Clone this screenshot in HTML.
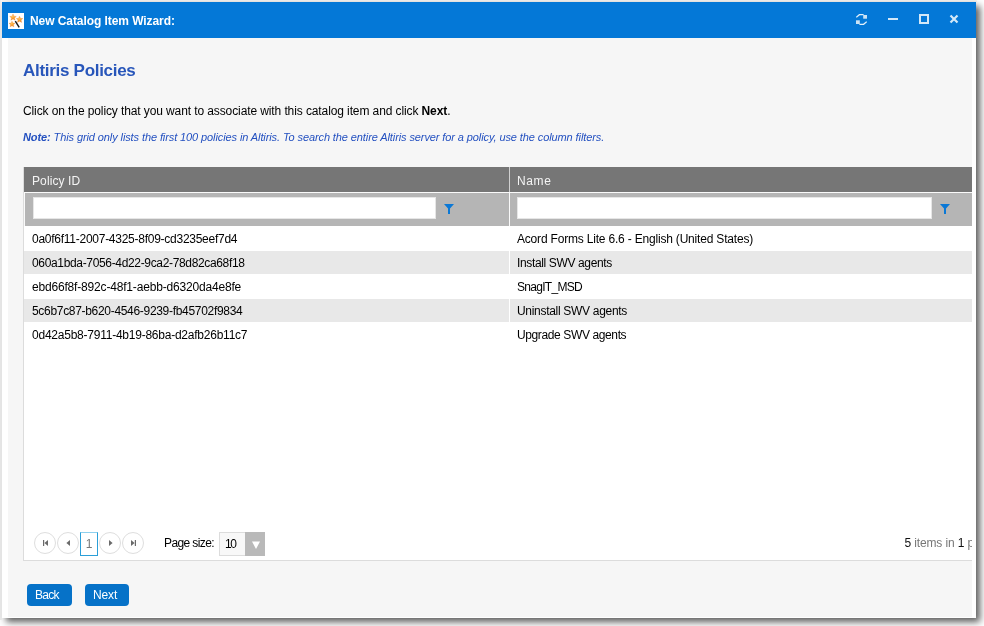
<!DOCTYPE html>
<html><head><meta charset="utf-8"><title>New Catalog Item Wizard</title>
<style>
*{box-sizing:border-box;margin:0;padding:0}
html,body{width:984px;height:626px;overflow:hidden;background:#fff;font-family:"Liberation Sans",sans-serif;font-size:12px;color:#000}
.abs{position:absolute;white-space:nowrap}
#edgeL{left:0;top:0;width:2px;height:620px;background:linear-gradient(90deg,#ececec,#f8f8f8)}
#edgeT{left:0;top:0;width:977px;height:2px;background:#f5f3f1}
#win{will-change:transform;left:2px;top:2px;width:974px;height:616px;background:#fff;box-shadow:4px 4px 7px rgba(0,0,0,.64)}
#tb{left:0;top:0;width:974px;height:36px;background:#0478d7}
#ttl{left:28px;top:12px;color:#fff;font-weight:bold;font-size:12px;line-height:15px;letter-spacing:-.07px}
#body{left:6px;top:36px;width:964px;height:579px;background:#f6f6f6;overflow:hidden}
h1{font-size:17px;line-height:20px;color:#2856ba;font-weight:bold;letter-spacing:-.29px}
.t{line-height:14px}
#grid{left:15px;top:129px;width:960px;height:394px;background:#fff;border:1px solid #dcdcdc;border-top:0}
.hd{top:0;height:25px;background:#767676;color:#f4f4f4;line-height:15px;padding:7px 0 0 8px;font-size:12px}
.fl{top:25px;height:34px;background:#b5b5b5;border-top:1px solid #fafafa;border-left:1px solid #fafafa}
.in{top:4px;height:22px;background:#fff;border:1px solid #e6e6e6}
.row{left:0;width:958px;height:24px;border-top:1px solid #fff}
.row.alt{background:#e8e8e8}
.c{top:0;height:23px;line-height:15px;padding-top:5px}
.c2{left:485px;width:470px;border-left:1px solid #fff;padding-left:7px}
.circ{top:0;width:22px;height:22px;border:1px solid #dedede;border-radius:50%;background:#fff}
.btn{top:546px;height:22px;background:#0672c8;border-radius:4px;color:#fff;line-height:15px;padding:4px 0 0 8px;text-align:left;font-size:12px}
</style></head><body>
<div id="edgeT" class="abs"></div><div id="edgeL" class="abs"></div>
<div id="win" class="abs">
 <div id="tb" class="abs">
  <svg class="abs" style="left:6px;top:11px" width="16" height="16" viewBox="0 0 16 16"><defs><radialGradient id="sg" cx=".45" cy=".4" r=".65"><stop offset="0" stop-color="#ffc45e"/><stop offset=".6" stop-color="#f7951f"/><stop offset="1" stop-color="#dd5a14"/></radialGradient></defs><rect width="16" height="16" fill="#fff"/><path d="M7.300 8.200 11.200 14.300" stroke="#1a1a1a" stroke-width="1.500" fill="none"/><g fill="url(#sg)" stroke="#f2a050" stroke-width=".4"><path d="M5 1l1 2.2 2.3.2-1.8 1.5.6 2.3L5 6l-2.1 1.2.6-2.3L1.7 3.400l2.300-.2z"/><path d="M11.500 3.200l1 2.100 2.300.3-1.700 1.500.5 2.300-2.100-1.200-2 1.200.5-2.300-1.700-1.500 2.300-.3z"/><path d="M4 8.200l.9 1.900 2.100.2-1.600 1.400.5 2.100L4 12.700l-1.900 1.100.5-2.100L1 10.300l2.100-.2z"/></g></svg>
  <div id="ttl" class="abs">New Catalog Item Wizard:</div>
  <svg class="abs" style="left:854px;top:12px" width="11" height="11" viewBox="0 0 11 11" fill="none" stroke="#e2f0fa" stroke-width="1.300"><path d="M.3 3.300L3.400.700H7.600"/><path d="M10.700 7.700L7.600 10.300H3.400"/><rect x="7.200" y="1" width="3.800" height="3.700" fill="#cbe3f5" stroke="none"/><rect x="0" y="6.300" width="3.800" height="3.700" fill="#cbe3f5" stroke="none"/></svg>
  <div class="abs" style="left:886px;top:16px;width:10px;height:2px;background:#d3e8f8"></div>
  <div class="abs" style="left:917px;top:12px;width:10px;height:10px;border:2px solid #d3e8f8"></div>
  <svg class="abs" style="left:947px;top:12px" width="10" height="10" viewBox="0 0 10 10"><path d="M1.500 1.500l7 7M8.500 1.500l-7 7" stroke="#d3e8f8" stroke-width="2.200"/></svg>
 </div>
 <div id="body" class="abs">
  <h1 class="abs" style="left:15px;top:23px">Altiris Policies</h1>
  <div class="abs t" style="left:15px;top:66px;letter-spacing:-.104px">Click on the policy that you want to associate with this catalog item and click <b>Next</b>.</div>
  <div class="abs t" style="left:15px;top:92px;font-size:11px;font-style:italic;color:#2350c0;letter-spacing:-.1px"><b>Note:</b> This grid only lists the first 100 policies in Altiris. To search the entire Altiris server for a policy, use the column filters.</div>
  <div id="grid" class="abs">
   <div class="abs hd" style="left:0;width:485px;letter-spacing:.1px">Policy ID</div>
   <div class="abs hd" style="left:485px;width:475px;border-left:1px solid #d0d0d0;padding-left:7px;letter-spacing:.6px">Name</div>
   <div class="abs fl" style="left:0;width:485px">
     <div class="abs in" style="left:8px;width:403px"></div>
     <svg class="abs" style="left:419px;top:11px" width="10" height="10" viewBox="0 0 10 10"><path d="M0 0h10L6 4.500V10H4V4.500z" fill="#0a78d6"/></svg>
   </div>
   <div class="abs fl" style="left:485px;width:475px">
     <div class="abs in" style="left:7px;width:415px"></div>
     <svg class="abs" style="left:430px;top:11px" width="10" height="10" viewBox="0 0 10 10"><path d="M0 0h10L6 4.500V10H4V4.500z" fill="#0a78d6"/></svg>
   </div>
   <div class="abs row" style="top:59px"><div class="abs c" style="left:8px;letter-spacing:-0.26px">0a0f6f11-2007-4325-8f09-cd3235eef7d4</div><div class="abs c c2" style="letter-spacing:-0.19px">Acord Forms Lite 6.6 - English (United States)</div></div>
   <div class="abs row alt" style="top:83px"><div class="abs c" style="left:8px;letter-spacing:-0.34px">060a1bda-7056-4d22-9ca2-78d82ca68f18</div><div class="abs c c2" style="letter-spacing:-0.36px">Install SWV agents</div></div>
   <div class="abs row" style="top:107px"><div class="abs c" style="left:8px;letter-spacing:-0.18px">ebd66f8f-892c-48f1-aebb-d6320da4e8fe</div><div class="abs c c2" style="letter-spacing:-0.7px">SnagIT_MSD</div></div>
   <div class="abs row alt" style="top:131px"><div class="abs c" style="left:8px;letter-spacing:-0.31px">5c6b7c87-b620-4546-9239-fb45702f9834</div><div class="abs c c2" style="letter-spacing:-0.3px">Uninstall SWV agents</div></div>
   <div class="abs row" style="top:155px"><div class="abs c" style="left:8px;letter-spacing:-0.235px">0d42a5b8-7911-4b19-86ba-d2afb26b11c7</div><div class="abs c c2" style="letter-spacing:-0.38px">Upgrade SWV agents</div></div>
   <div class="abs" style="left:10px;top:365px;width:940px;height:24px">
     <div class="abs circ" style="left:0"><svg class="abs" style="left:-1px;top:-1px" width="22" height="22" viewBox="0 0 22 22" fill="#6a6a6a"><rect x="9" y="8" width="1.200" height="6"/><path d="M14 8v6l-3.600-3z"/></svg></div>
     <div class="abs circ" style="left:23px"><svg class="abs" style="left:-1px;top:-1px" width="22" height="22" viewBox="0 0 22 22" fill="#6a6a6a"><path d="M13 8v6l-3.600-3z"/></svg></div>
     <div class="abs" style="left:46px;top:0;width:18px;height:24px;border:1px solid #2b9fd8;border-top-color:#8fd0ee;color:#777;font-size:12px;line-height:15px;padding-top:4px;text-align:center;background:#fff">1</div>
     <div class="abs circ" style="left:65px"><svg class="abs" style="left:-1px;top:-1px" width="22" height="22" viewBox="0 0 22 22" fill="#6a6a6a"><path d="M10 8v6l3.600-3z"/></svg></div>
     <div class="abs circ" style="left:88px"><svg class="abs" style="left:-1px;top:-1px" width="22" height="22" viewBox="0 0 22 22" fill="#6a6a6a"><path d="M9 8v6l3.600-3z"/><rect x="12.800" y="8" width="1.200" height="6"/></svg></div>
     <div class="abs" style="left:130px;top:4px;line-height:15px;letter-spacing:-.6px">Page size:</div>
     <div class="abs" style="left:185px;top:0;width:46px;height:24px;border:1px solid #dcdcdc;background:#f8f8f8;line-height:15px;padding:4px 0 0 5px;letter-spacing:-1.300px">10</div>
     <div class="abs" style="left:211px;top:0;width:20px;height:24px;background:#b9b9b9"></div>
     <svg class="abs" style="left:216.500px;top:7.700px" width="10" height="10" viewBox="0 0 10 10"><path d="M1 1.500h8L5 9z" fill="#fff"/></svg>
   </div>
   <div class="abs" style="left:880.400px;top:369px;line-height:15px;color:#777;letter-spacing:-.12px"><span style="color:#111">5</span> items in <span style="color:#111">1</span> pages</div>
  </div>
  <div class="abs btn" style="left:19px;width:45px;letter-spacing:-.7px">Back</div>
  <div class="abs btn" style="left:77px;width:44px;letter-spacing:-.15px">Next</div>
 </div>
</div>
</body></html>
